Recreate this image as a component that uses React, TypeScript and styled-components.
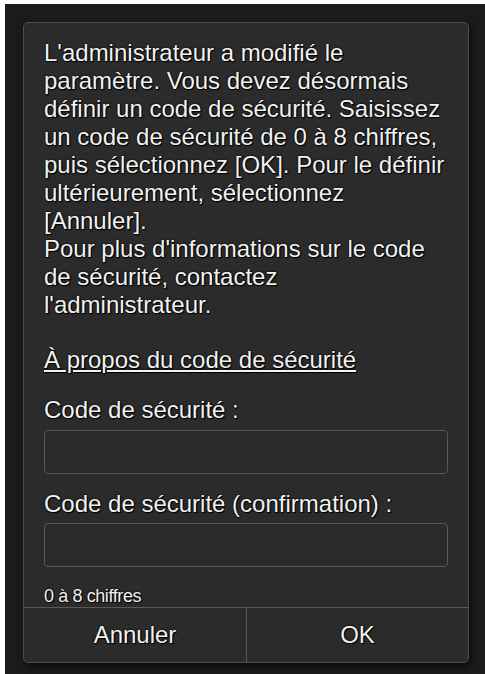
import React from "react";
import styled, { createGlobalStyle } from "styled-components";

const Global = createGlobalStyle`
  html, body { margin: 0; padding: 0; background: #1b1b1b; }
  * { box-sizing: border-box; }
`;

const Page = styled.div`
  width: 485px;
  height: 674px;
  border-top: 4px solid #ffffff;
  border-left: 5px solid #ffffff;
  background: #1b1b1b;
  padding: 18px 0 0 18px;
  font-family: "Liberation Sans", Arial, Helvetica, sans-serif;
  color: #f2f2f2;
`;

const Dialog = styled.div`
  width: 446px;
  height: 641px;
  display: flex;
  flex-direction: column;
  background: #2b2b2b;
  border: 1px solid #4e4e4e;
  border-radius: 5px;
  box-shadow: 2px 3px 6px rgba(0, 0, 0, 0.7);
  overflow: hidden;
`;

const Body = styled.div`
  flex: 1;
  display: flex;
  flex-direction: column;
  padding: 16px 20px 0 20px;
`;

const shadow = `0 0 2px #000, 0 0 1px #000, 1px 1px 1px #000`;

const Message = styled.p`
  margin: 0;
  font-size: 24px;
  line-height: 28px;
  text-shadow: ${shadow};
`;

const HelpLink = styled.a`
  display: block;
  margin-top: 27px;
  font-size: 24px;
  line-height: 28px;
  color: #f2f2f2;
  text-decoration: underline;
  text-underline-offset: 2px;
  text-shadow: ${shadow};
`;

const Label = styled.label<{ $gap: number }>`
  display: block;
  margin-top: ${(p) => p.$gap}px;
  font-size: 24px;
  line-height: 28px;
  text-shadow: ${shadow};
`;

const Input = styled.input<{ $gap: number }>`
  display: block;
  width: 100%;
  height: 44px;
  margin-top: ${(p) => p.$gap}px;
  background: #2a2a2a;
  border: 1px solid #585858;
  border-radius: 4px;
  color: #f2f2f2;
  font-size: 22px;
  padding: 0 10px;
  outline: none;
`;

const Hint = styled.div`
  margin-top: 19px;
  font-size: 18px;
  line-height: 20px;
  letter-spacing: -0.4px;
  text-shadow: ${shadow};
`;

const ButtonBar = styled.div`
  display: grid;
  grid-template-columns: 1fr 1fr;
  height: 55px;
  border-top: 1px solid #5a5a5a;
`;

const ActionButton = styled.button<{ $divider?: boolean }>`
  background: transparent;
  border: none;
  border-left: ${(p) => (p.$divider ? "1px solid #5a5a5a" : "none")};
  color: #f2f2f2;
  font-family: inherit;
  font-size: 24px;
  line-height: 28px;
  text-shadow: ${shadow};
  cursor: pointer;
  padding: 0;
`;

export default function App() {
  return (
    <>
      <Global />
      <Page>
        <Dialog>
          <Body>
            <Message>
              L'administrateur a modifié le paramètre. Vous devez désormais
              définir un code de sécurité. Saisissez un code de sécurité de 0 à
              8 chiffres, puis sélectionnez [OK]. Pour le définir
              ultérieurement, sélectionnez [Annuler].
              <br />
              Pour plus d'informations sur le code de sécurité, contactez
              l'administrateur.
            </Message>
            <HelpLink href="#">À propos du code de sécurité</HelpLink>
            <Label $gap={22}>Code de sécurité :</Label>
            <Input $gap={6} type="password" />
            <Label $gap={16}>Code de sécurité (confirmation) :</Label>
            <Input $gap={5} type="password" />
            <Hint>0 à 8 chiffres</Hint>
          </Body>
          <ButtonBar>
            <ActionButton>Annuler</ActionButton>
            <ActionButton $divider>OK</ActionButton>
          </ButtonBar>
        </Dialog>
      </Page>
    </>
  );
}
